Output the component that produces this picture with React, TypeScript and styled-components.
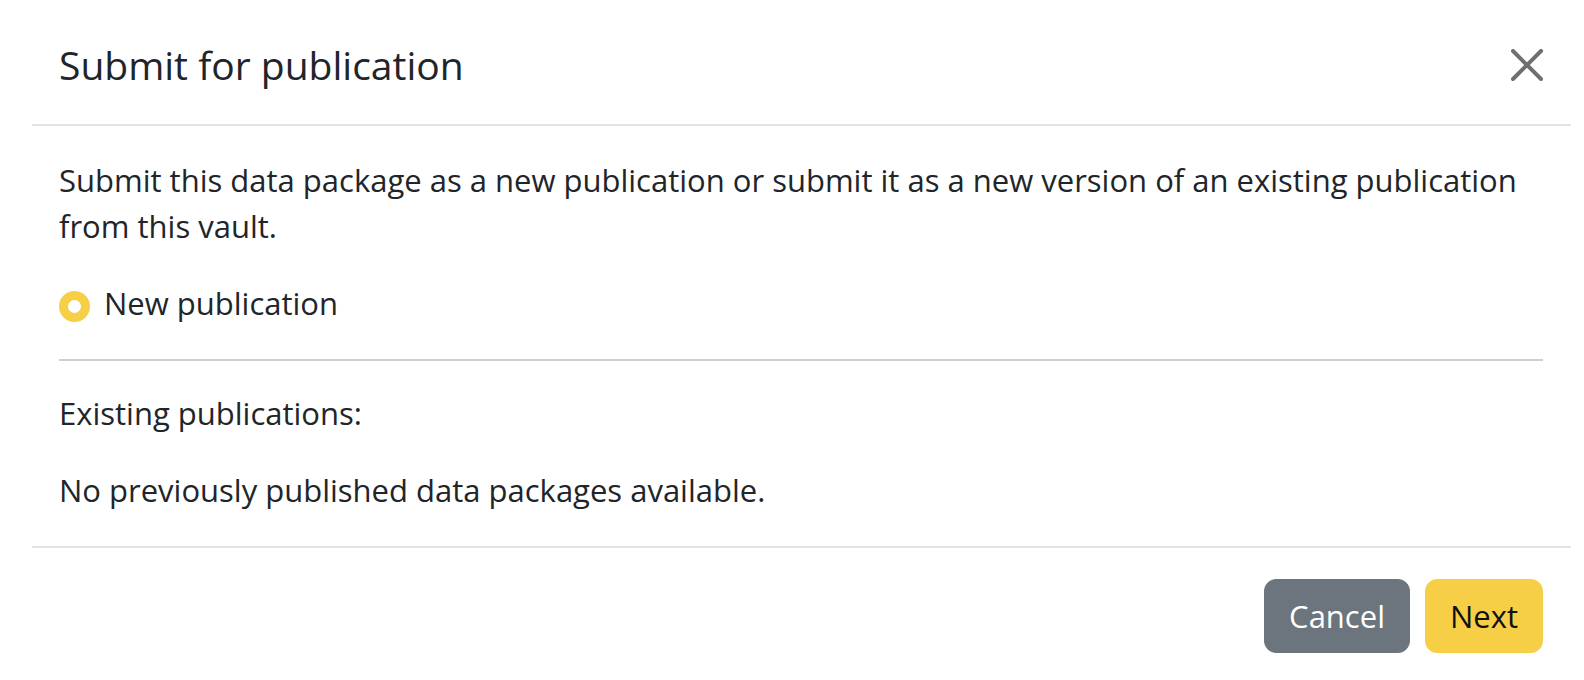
import React from "react";
import styled, { createGlobalStyle } from "styled-components";

const GlobalStyle = createGlobalStyle`
  html, body {
    margin: 0;
    padding: 0;
    background: #ffffff;
  }
  body {
    font-family: "Open Sans", "Noto Sans", "Liberation Sans", sans-serif;
    color: #212529;
    -webkit-font-smoothing: antialiased;
  }
  * { box-sizing: border-box; }
`;

const YELLOW = "#f6cf47";

const Modal = styled.div`
  margin-left: 32px;
  width: 1539px;
  background: #ffffff;
  display: flex;
  flex-direction: column;
`;

const Header = styled.header`
  display: flex;
  align-items: center;
  justify-content: space-between;
  padding: 41px 28px 36px 27px;
  border-bottom: 2px solid #e3e3e3;
`;

const Title = styled.h5`
  margin: 0;
  font-size: 39px;
  line-height: 47px;
  font-weight: 400;
  color: #212529;
`;

const CloseButton = styled.button`
  width: 32px;
  height: 32px;
  padding: 0;
  border: 0;
  background: transparent;
  opacity: 0.56;
  cursor: pointer;
  display: flex;
  align-items: center;
  justify-content: center;
  svg { display: block; }
`;

const Body = styled.div`
  padding: 31px 28px 33px 27px;
  border-bottom: 2px solid #e3e3e3;
  font-size: 31px;
  line-height: 46px;
`;

const Text = styled.p`
  margin: 0 0 31px;
  &:last-child { margin-bottom: 0; }
`;

const RadioRow = styled.label`
  display: flex;
  align-items: flex-start;
  gap: 14px;
  cursor: pointer;
`;

const RadioDot = styled.span`
  flex: none;
  width: 31px;
  height: 31px;
  margin-top: 11px;
  border-radius: 50%;
  border: 9.5px solid ${YELLOW};
  background: #ffffff;
`;

const Divider = styled.hr`
  margin: 33px 0 29px;
  border: 0;
  border-top: 2px solid #cfcfcf;
  height: 0;
`;

const Footer = styled.footer`
  display: flex;
  justify-content: flex-end;
  gap: 15px;
  padding: 31px 28px 26px 27px;
`;

const Button = styled.button<{ $variant: "secondary" | "primary" }>`
  height: 74px;
  padding: 0 24px;
  border-radius: 12px;
  border: 1px solid ${(p) => (p.$variant === "primary" ? YELLOW : "#6c757d")};
  background: ${(p) => (p.$variant === "primary" ? YELLOW : "#6c757d")};
  color: ${(p) => (p.$variant === "primary" ? "#111111" : "#ffffff")};
  font-family: inherit;
  font-size: 31px;
  line-height: 46px;
  cursor: pointer;
`;

function CloseIcon() {
  return (
    <svg width="32" height="32" viewBox="0 0 16 16" aria-hidden="true">
      <path
        fill="#000"
        d="M.293.293a1 1 0 0 1 1.414 0L8 6.586 14.293.293a1 1 0 1 1 1.414 1.414L9.414 8l6.293 6.293a1 1 0 0 1-1.414 1.414L8 9.414l-6.293 6.293a1 1 0 0 1-1.414-1.414L6.586 8 .293 1.707a1 1 0 0 1 0-1.414z"
      />
    </svg>
  );
}

export default function App() {
  return (
    <>
      <GlobalStyle />
      <Modal role="dialog" aria-labelledby="submit-title">
        <Header>
          <Title id="submit-title">Submit for publication</Title>
          <CloseButton aria-label="Close">
            <CloseIcon />
          </CloseButton>
        </Header>
        <Body>
          <Text>
            Submit this data package as a new publication or submit it as a new
            version of an existing publication from this vault.
          </Text>
          <RadioRow>
            <RadioDot />
            <span>New publication</span>
          </RadioRow>
          <Divider />
          <Text>Existing publications:</Text>
          <Text>No previously published data packages available.</Text>
        </Body>
        <Footer>
          <Button $variant="secondary">Cancel</Button>
          <Button $variant="primary">Next</Button>
        </Footer>
      </Modal>
    </>
  );
}
